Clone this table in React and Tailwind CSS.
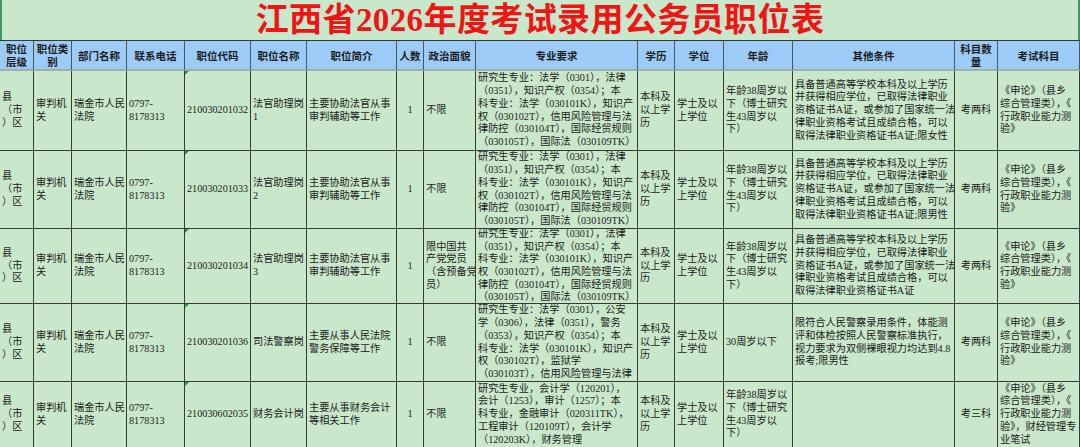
const COLS =
  'grid grid-cols-[34px_38px_55px_58px_66px_56px_90px_27px_52px_162px_37px_49px_69px_162px_43px_82px]'

const HEADERS = [
  ['职位', '层级'],
  ['职位类', '别'],
  ['部门名称'],
  ['联系电话'],
  ['职位代码'],
  ['职位名称'],
  ['职位简介'],
  ['人数'],
  ['政治面貌'],
  ['专业要求'],
  ['学历'],
  ['学位'],
  ['年龄'],
  ['其他条件'],
  ['科目数', '量'],
  ['考试科目'],
]

const LAW_MAJOR = [
  '研究生专业：法学（0301），法律',
  '（0351），知识产权（0354）；本',
  '科专业：法学（030101K），知识产',
  '权（030102T），信用风险管理与法',
  '律防控（030104T），国际经贸规则',
  '（030105T），国际法（030109TK）',
]

const AGE38 = ['年龄38周岁以', '下（博士研究', '生43周岁以', '下）']

const LAW_COND = (tail) => [
  '具备普通高等学校本科及以上学历',
  '并获得相应学位，已取得法律职业',
  '资格证书A证，或参加了国家统一法',
  '律职业资格考试且成绩合格，可以',
  '取得法律职业资格证书A证' + tail,
]

const EXAM2 = ['《申论》（县乡', '综合管理类），《', '行政职业能力测', '验》']

const common = {
  level: ['县', '（市', '）区'],
  type: ['审判机', '关'],
  dept: ['瑞金市人民', '法院'],
  phone: ['0797-', '8178313'],
  edu: ['本科及', '以上学', '历'],
  degree: ['学士及以', '上学位'],
}

const ROWS = [
  {
    h: 'h-[80px]',
    code: '210030201032',
    name: ['法官助理岗', '1'],
    intro: ['主要协助法官从事', '审判辅助等工作'],
    politics: ['不限'],
    major: LAW_MAJOR,
    age: AGE38,
    cond: LAW_COND(';限女性'),
    count: '考两科',
    exam: EXAM2,
  },
  {
    h: 'h-[78px]',
    code: '210030201033',
    name: ['法官助理岗', '2'],
    intro: ['主要协助法官从事', '审判辅助等工作'],
    politics: ['不限'],
    major: LAW_MAJOR,
    age: AGE38,
    cond: LAW_COND(';限男性'),
    count: '考两科',
    exam: EXAM2,
  },
  {
    h: 'h-[75px]',
    code: '210030201034',
    name: ['法官助理岗', '3'],
    intro: ['主要协助法官从事', '审判辅助等工作'],
    politics: ['限中国共', '产党党员', '（含预备党', '员）'],
    major: LAW_MAJOR,
    age: AGE38,
    cond: LAW_COND(''),
    count: '考两科',
    exam: EXAM2,
  },
  {
    h: 'h-[78px]',
    code: '210030201036',
    name: ['司法警察岗'],
    intro: ['主要从事人民法院', '警务保障等工作'],
    politics: ['不限'],
    major: [
      '研究生专业：法学（0301），公安',
      '学（0306），法律（0351），警务',
      '（0353），知识产权（0354）；本',
      '科专业：法学（030101K），知识产',
      '权（030102T），监狱学',
      '（030103T），信用风险管理与法律',
    ],
    age: ['30周岁以下'],
    cond: [
      '限符合人民警察录用条件，体能测',
      '评和体检按照人民警察标准执行，',
      '视力要求为双侧裸眼视力均达到4.8',
      '报考;限男性',
    ],
    count: '考两科',
    exam: EXAM2,
  },
  {
    h: 'h-[66px]',
    code: '210030602035',
    name: ['财务会计岗'],
    intro: ['主要从事财务会计', '等相关工作'],
    politics: ['不限'],
    major: [
      '研究生专业，会计学（120201），',
      '会计（1253），审计（1257）；本',
      '科专业，金融审计（020311TK），',
      '工程审计（120109T），会计学',
      '（120203K），财务管理',
    ],
    age: AGE38,
    cond: [],
    count: '考三科',
    exam: ['《申论》（县乡', '综合管理类），《', '行政职业能力测', '验》，财经管理专', '业笔试'],
  },
]

function Cell({ lines, center, mark }) {
  return (
    <div
      className={`relative flex items-center overflow-hidden border-r border-b border-[#343b34] px-[2px] ${
        center ? 'justify-center text-center' : ''
      }`}
    >
      {mark && (
        <span className="absolute left-0 top-0 h-0 w-0 border-t-[4px] border-r-[4px] border-t-[#1f9a3a] border-r-transparent" />
      )}
      <div className="whitespace-nowrap">
        {lines.map((l, i) => (
          <div key={i}>{l}</div>
        ))}
      </div>
    </div>
  )
}

export default function App() {
  return (
    <div className="h-[447px] w-[1080px] overflow-hidden bg-[#c9e7cb] font-['Liberation_Serif','Noto_Sans_CJK_SC',serif] text-[#1c1c1c]">
      <div className="flex h-[40px] items-center justify-center border-x-2 border-[#3f9a5c]">
        <h1 className="text-[33px] font-bold leading-none tracking-[0.4px] text-[#ef1515]">
          江西省2026年度考试录用公务员职位表
        </h1>
      </div>

      <div className={`${COLS} h-[31px] border-t border-[#343b34] bg-[#9ccbf8] font-['Noto_Sans_CJK_SC',sans-serif] text-[10.5px] font-bold leading-[13px]`}>
        {HEADERS.map((h, i) => (
          <div
            key={i}
            className="flex items-center justify-center border-r border-b-2 border-r-[#4a5560] border-b-[#a3aea6] text-center"
          >
            <div>
              {h.map((l, j) => (
                <div key={j}>{l}</div>
              ))}
            </div>
          </div>
        ))}
      </div>

      {ROWS.map((r) => (
        <div key={r.code} className={`${COLS} ${r.h} text-[10.2px] leading-[12.7px]`}>
          <Cell lines={common.level} />
          <Cell lines={common.type} />
          <Cell lines={common.dept} />
          <Cell lines={common.phone} />
          <Cell lines={[r.code]} mark />
          <Cell lines={r.name} />
          <Cell lines={r.intro} />
          <Cell lines={['1']} center />
          <Cell lines={r.politics} />
          <Cell lines={r.major} />
          <Cell lines={common.edu} />
          <Cell lines={common.degree} />
          <Cell lines={r.age} />
          <Cell lines={r.cond} />
          <Cell lines={[r.count]} center />
          <Cell lines={r.exam} />
        </div>
      ))}
    </div>
  )
}
